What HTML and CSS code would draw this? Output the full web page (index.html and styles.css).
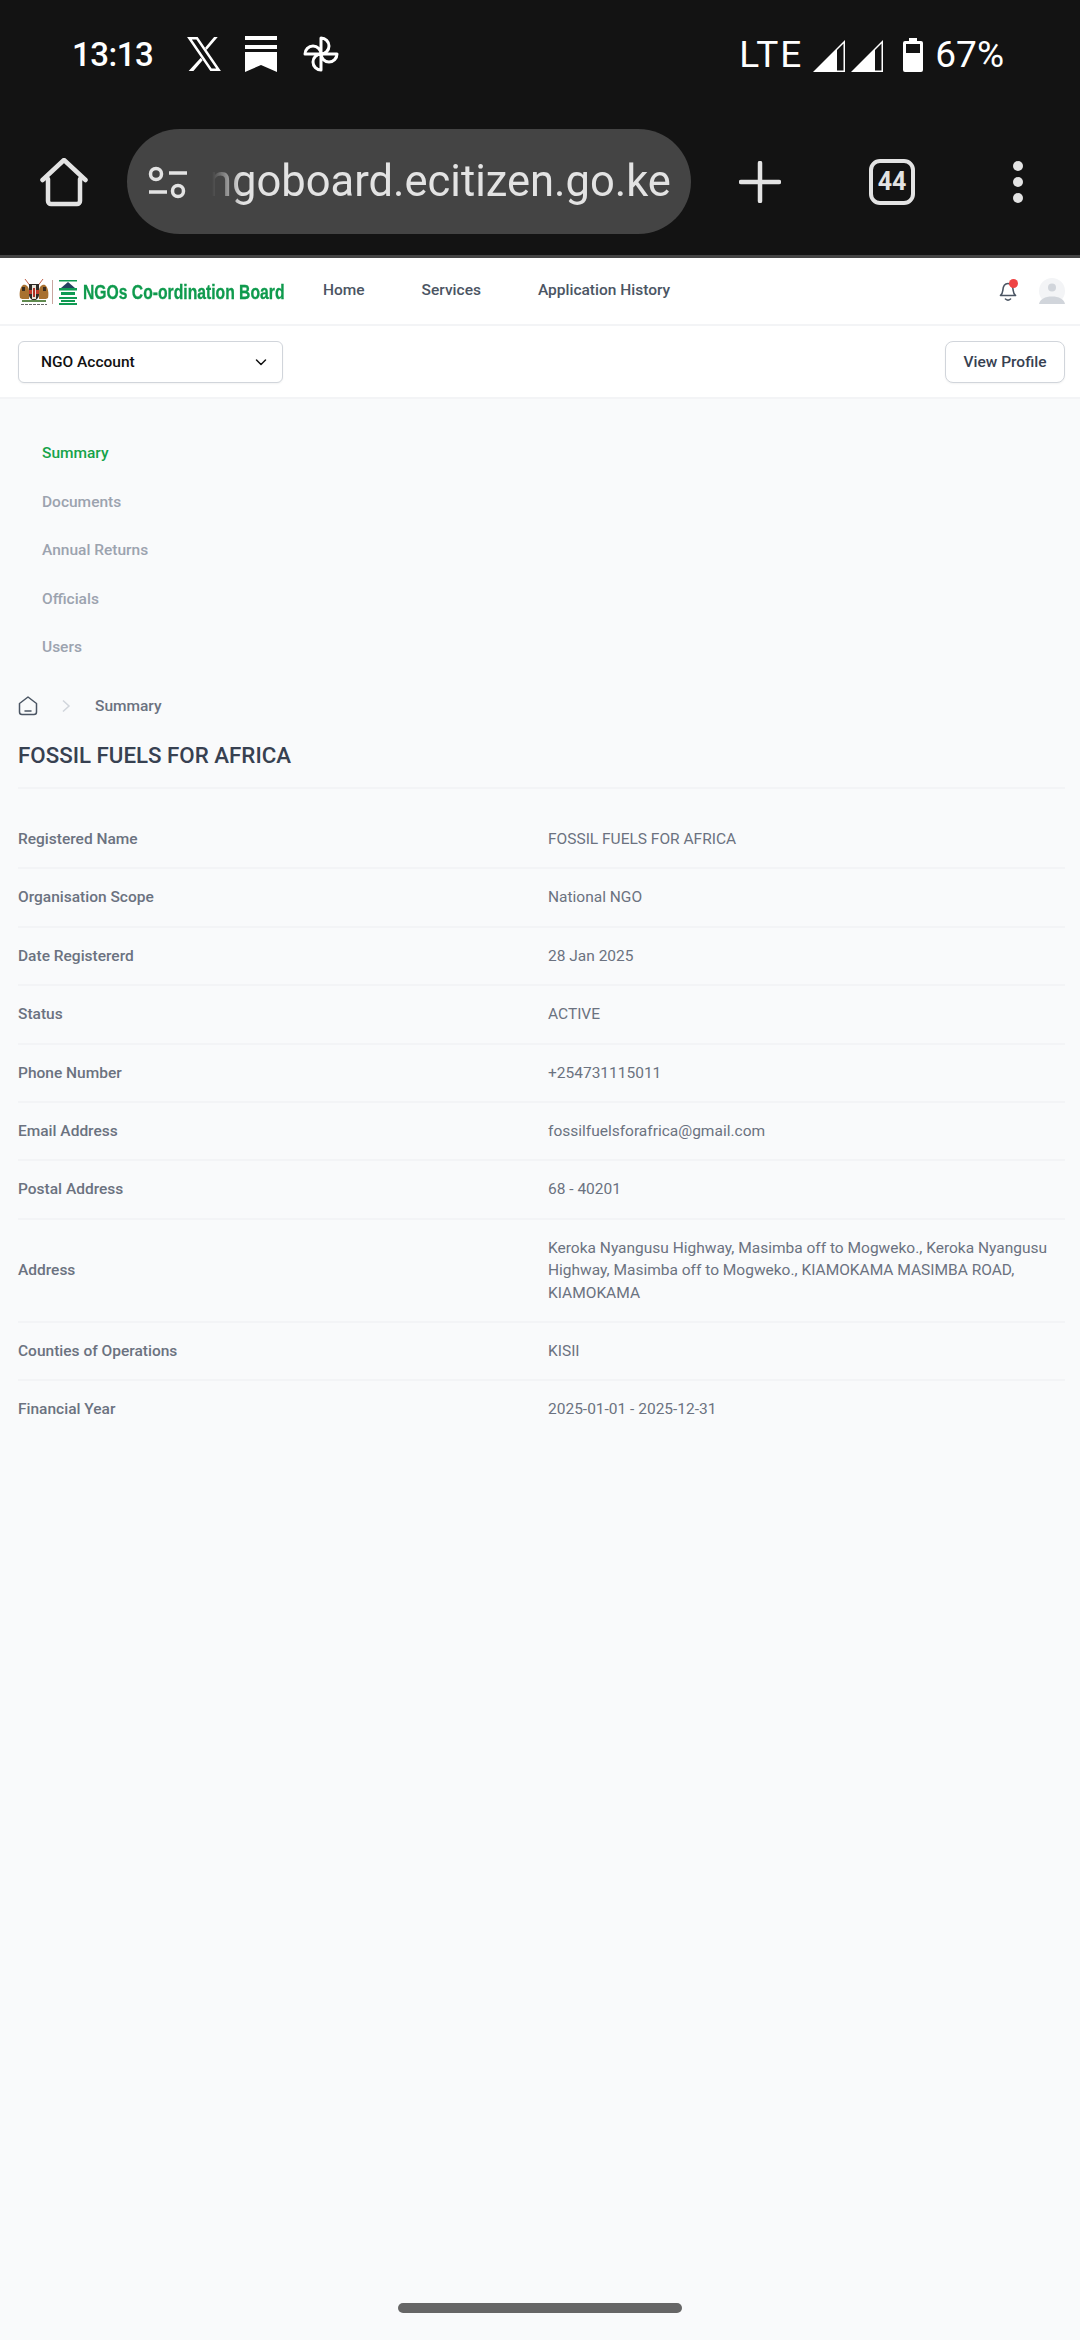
FILE: index.html
```html
<!DOCTYPE html>
<html lang="en">
<head>
    <meta charset="UTF-8">
    <meta name="viewport" content="width=device-width, initial-scale=1.0">
    <title>NGOs Co-ordination Board</title>
    <link rel="stylesheet" href="styles.css">
</head>
<body>
    <div class="chrome">
        <div class="status-bar">
            <div class="status-left">
                <span class="clock">13:13</span>
                <svg class="ic-x" viewBox="0 0 34 34"><path d="M1 1h10l22 32H23zM5.500 3.200 24.200 30.800h4.300L9.800 3.200z" fill="#fff" fill-rule="evenodd"/><path d="M30 1 19.500 13.200 18 11 26.500 1zM14 20.500 15.700 23 7 33H2.500z" fill="#fff"/></svg>
                <svg class="ic-news" viewBox="0 0 32 36"><path d="M0 0h32v4H0zM0 9h32v4H0zM0 16h32v20L16 29 0 36z" fill="#fff"/></svg>
                <svg class="ic-pin" viewBox="0 0 36 36">
                    <g fill="none" stroke="#fff" stroke-width="3" stroke-linejoin="round">
                        <path d="M18 18V2a8 8 0 0 1 0 16z"/>
                        <path d="M18 18h16a8 8 0 0 1-16 0z"/>
                        <path d="M18 18v16a8 8 0 0 1 0-16z"/>
                        <path d="M18 18H2a8 8 0 0 1 16 0z"/>
                    </g>
                </svg>
            </div>
            <div class="status-right">
                <span class="lte">LTE</span>
                <svg class="ic-signal" viewBox="0 0 32 32"><path fill-rule="evenodd" d="M32 0v32H0zM30.500 3.500 24 10v20.500h6.500z" fill="#fff"/></svg>
                <svg class="ic-signal" viewBox="0 0 32 32"><path fill-rule="evenodd" d="M32 0v32H0zM30.500 3.500 24 10v20.500h6.500z" fill="#fff"/></svg>
                <svg class="ic-batt" viewBox="0 0 20 34"><path fill-rule="evenodd" d="M6 0h8v3h4a2 2 0 0 1 2 2v27a2 2 0 0 1-2 2H2a2 2 0 0 1-2-2V5a2 2 0 0 1 2-2h4zM3 6v9h14V6z" fill="#fff"/></svg>
                <span class="batt-pct">67%</span>
            </div>
        </div>
        <div class="toolbar">
            <svg class="ic-home" viewBox="0 0 48 50"><path d="M8 21v22a3 3 0 0 0 3 3h26a3 3 0 0 0 3-3V21M2.500 22 24 2l21.500 20" fill="none" stroke="#e3e3e3" stroke-width="4.500" stroke-linecap="round" stroke-linejoin="round"/></svg>
            <div class="omnibox">
                <svg class="ic-tune" viewBox="0 0 40 34"><circle cx="8" cy="8" r="5.500" fill="none" stroke="#e3e3e3" stroke-width="3.500"/><path d="M21 7h18M1 26h18" stroke="#e3e3e3" stroke-width="3.500"/><circle cx="30" cy="25" r="5.500" fill="none" stroke="#e3e3e3" stroke-width="3.500"/></svg>
                <div class="url-clip"><span class="url">ngoboard.ecitizen.go.ke</span></div>
            </div>
            <svg class="ic-plus" viewBox="0 0 42 42"><path d="M21 2v38M2 21h38" stroke="#e3e3e3" stroke-width="4.500" stroke-linecap="round"/></svg>
            <div class="tab-count">44</div>
            <div class="ic-menu"><i></i><i></i><i></i></div>
        </div>
    </div>

    <header class="site-header">
        <div class="logo">
            <svg class="logo-arms" viewBox="0 0 32 28">
                <path d="M7 1l6 8M25 1l-6 8" stroke="#c0604a" stroke-width="1"/>
                <path d="M2 20c-1-5 0-11 3-13 3-1 6 2 6 6v8H4z" fill="#a8702f"/>
                <path d="M30 20c1-5 0-11-3-13-3-1-6 2-6 6v8h7z" fill="#a8702f"/>
                <path d="M4 9h3v4H4zM25 9h3v4h-3z" fill="#3a2c20"/>
                <path d="M11 6h10v11c0 3-3 5-5 6-2-1-5-3-5-6z" fill="#2f2b27"/>
                <path d="M11 12h10v4H11z" fill="#c0392b"/>
                <path d="M14 7h4v14h-4z" fill="#e8e2d8"/>
                <path d="M15 10h2v9h-2z" fill="#b03024"/>
                <path d="M4 22h24v2H4z" fill="#5f8a4e"/>
                <path d="M3 26.500h26" stroke="#666" stroke-width="1" stroke-dasharray="3 1"/>
            </svg>
            <span class="logo-rule"></span>
            <svg class="logo-mark" viewBox="0 0 20 26">
                <path d="M1 1h18v1.500H1z" fill="#0f9a52"/>
                <path d="M3 9 10 3l7 6z" fill="#23415f"/>
                <path d="M1 9h18v2.500H1zM3 13h14v3H3zM1 18h18v2H1zM3 21h14v2H3zM1 24h18v2H1z" fill="#0f9a52"/>
            </svg>
            <span class="logo-text">NGOs Co-ordination Board</span>
        </div>
        <nav class="main-nav">
            <a>Home</a>
            <a>Services</a>
            <a>Application History</a>
        </nav>
        <div class="header-actions">
            <div class="bell">
                <svg viewBox="0 0 18 22"><path d="M1.500 15.500c1.500-1 2-2.500 2.300-5C4 7 5 3.500 9 3.500s5 3.500 5.200 7c.3 2.500.8 4 2.300 5zM6.500 19c1.500 1.300 3.500 1.300 5 0" fill="none" stroke="#4b5563" stroke-width="1.600" stroke-linecap="round" stroke-linejoin="round"/></svg>
                <span class="bell-dot"></span>
            </div>
            <svg class="avatar" viewBox="0 0 26 26"><circle cx="13" cy="13" r="13" fill="#f3f4f6"/><circle cx="13" cy="9.500" r="4" fill="#d1d5db"/><path d="M0 26c1-5 6-7.500 13-7.500S25 21 26 26z" fill="#d1d5db"/></svg>
        </div>
    </header>

    <div class="account-bar">
        <div class="account-select">
            <span>NGO Account</span>
            <svg viewBox="0 0 14 14"><path d="M2.500 5 7 9.500 11.500 5" fill="none" stroke="#111" stroke-width="1.500" stroke-linecap="round" stroke-linejoin="round"/></svg>
        </div>
        <button class="profile-btn">View Profile</button>
    </div>

    <main class="content">
        <ul class="side-tabs">
            <li class="active">Summary</li>
            <li>Documents</li>
            <li>Annual Returns</li>
            <li>Officials</li>
            <li>Users</li>
        </ul>

        <div class="breadcrumb">
            <svg class="crumb-home" viewBox="0 0 20 20"><path d="M1.500 7.500 10 1l8.500 6.500V16a2.500 2.500 0 0 1-2.500 2.500H4A2.500 2.500 0 0 1 1.500 16zM7 15h6" fill="none" stroke="#4b5563" stroke-width="1.500" stroke-linecap="round" stroke-linejoin="round"/></svg>
            <svg class="crumb-sep" viewBox="0 0 10 14"><path d="M2 1.500 8 7l-6 5.500" fill="none" stroke="#d1d5db" stroke-width="1.500"/></svg>
            <span>Summary</span>
        </div>

        <h1>FOSSIL FUELS FOR AFRICA</h1>

        <dl class="details">
            <div class="row"><dt>Registered Name</dt><dd>FOSSIL FUELS FOR AFRICA</dd></div>
            <div class="row"><dt>Organisation Scope</dt><dd>National NGO</dd></div>
            <div class="row"><dt>Date Registererd</dt><dd>28 Jan 2025</dd></div>
            <div class="row"><dt>Status</dt><dd>ACTIVE</dd></div>
            <div class="row"><dt>Phone Number</dt><dd>+254731115011</dd></div>
            <div class="row"><dt>Email Address</dt><dd>fossilfuelsforafrica@gmail.com</dd></div>
            <div class="row"><dt>Postal Address</dt><dd>68 - 40201</dd></div>
            <div class="row"><dt>Address</dt><dd>Keroka Nyangusu Highway, Masimba off to Mogweko., Keroka Nyangusu Highway, Masimba off to Mogweko., KIAMOKAMA MASIMBA ROAD, KIAMOKAMA</dd></div>
            <div class="row"><dt>Counties of Operations</dt><dd>KISII</dd></div>
            <div class="row"><dt>Financial Year</dt><dd>2025-01-01 - 2025-12-31</dd></div>
        </dl>
    </main>

    <div class="home-indicator"></div>
</body>
</html>
```

FILE: styles.css
```css
* {
    box-sizing: border-box;
}
html, body {
    height: 100%;
}
body {
    margin: 0;
    height: 2340px;
    overflow: hidden;
    display: flex;
    flex-direction: column;
    position: relative;
    background-color: #f9fafb;
    font-family: Roboto, "Noto Sans", sans-serif;
    font-size: 15.500px;
}

/* browser chrome */
.chrome {
    height: 258px;
    background-color: #131313;
    border-bottom: 3px solid #444;
    flex-shrink: 0;
}
.status-bar {
    height: 110px;
    padding: 34px 76px 0 72px;
    display: flex;
    justify-content: space-between;
    color: #fff;
}
.status-left, .status-right {
    display: flex;
    align-items: center;
    height: 40px;
}
.clock {
    font-size: 33px;
    font-weight: 500;
    letter-spacing: -0.5px;
    margin-right: 33px;
}
.ic-x {
    width: 36px;
    height: 36px;
    margin-right: 23px;
}
.ic-news {
    width: 32px;
    height: 36px;
    margin-right: 26px;
}
.ic-pin {
    width: 36px;
    height: 36px;
}
.lte {
    font-size: 37px;
    letter-spacing: 2px;
    margin-right: 10px;
}
.ic-signal {
    width: 32px;
    height: 32px;
    margin-right: 6px;
    margin-top: 4px;
}
.ic-batt {
    width: 20px;
    height: 34px;
    margin-left: 14px;
    margin-right: 12px;
    margin-top: 2px;
}
.batt-pct {
    font-size: 37px;
}
.toolbar {
    height: 105px;
    display: flex;
    align-items: center;
    padding: 0 0 0 40px;
    margin-top: 19px;
}
.ic-home {
    width: 48px;
    height: 50px;
    margin-top: 2px;
    margin-right: 39px;
    flex-shrink: 0;
}
.omnibox {
    width: 564px;
    height: 105px;
    border-radius: 53px;
    background-color: #444;
    display: flex;
    align-items: center;
    padding: 0 23px 0 21px;
    flex-shrink: 0;
}
.ic-tune {
    width: 40px;
    height: 34px;
    flex-shrink: 0;
    margin-top: 2px;
}
.url-clip {
    margin-left: 20px;
    flex: 1;
    display: flex;
    justify-content: flex-end;
    white-space: nowrap;
    -webkit-mask-image: linear-gradient(to right, transparent 4px, #000 34px);
    mask-image: linear-gradient(to right, transparent 4px, #000 34px);
}
.url {
    font-size: 43.500px;
    color: #e3e3e3;
}
.ic-plus {
    width: 42px;
    height: 42px;
    margin-left: 48px;
    flex-shrink: 0;
}
.tab-count {
    width: 46px;
    height: 46px;
    margin-left: 88px;
    border: 4px solid #e3e3e3;
    border-radius: 11px;
    color: #e3e3e3;
    font-weight: 700;
    font-size: 25px;
    display: flex;
    align-items: center;
    justify-content: center;
    flex-shrink: 0;
}
.ic-menu {
    margin-left: 98px;
    display: flex;
    flex-direction: column;
    gap: 6px;
}
.ic-menu i {
    display: block;
    width: 10px;
    height: 10px;
    border-radius: 50%;
    background-color: #e3e3e3;
}

/* site header */
.site-header {
    height: 68px;
    background-color: white;
    border-bottom: 2px solid #f3f4f6;
    padding: 0 15px 0 18px;
    display: flex;
    align-items: center;
    flex-shrink: 0;
}
.logo {
    display: flex;
    align-items: center;
    width: 267px;
    height: 28px;
    margin-top: 2px;
    flex-shrink: 0;
}
.logo-arms {
    width: 32px;
    height: 28px;
    flex-shrink: 0;
}
.logo-rule {
    width: 1px;
    height: 24px;
    margin: 0 5px 0 2px;
    background-color: #c9a6a0;
    flex-shrink: 0;
}
.logo-mark {
    width: 20px;
    height: 26px;
    margin-right: 5px;
    flex-shrink: 0;
}
.logo-text {
    display: block;
    width: 202px;
    font-family: "Liberation Sans", Arial, sans-serif;
    font-weight: 700;
    font-size: 20px;
    white-space: nowrap;
    color: #0f9a4d;
    -webkit-text-stroke: 0.3px #0f9a4d;
    transform: scaleX(0.785);
    transform-origin: left center;
}
.main-nav {
    display: flex;
    gap: 57px;
    margin-left: 38px;
    margin-top: -3px;
}
.main-nav a {
    color: #4b5563;
    font-weight: 500;
}
.header-actions {
    margin-left: auto;
    display: flex;
    align-items: center;
    gap: 22px;
}
.bell {
    position: relative;
    width: 18px;
    height: 22px;
}
.bell svg {
    width: 18px;
    height: 22px;
    display: block;
}
.bell-dot {
    position: absolute;
    top: -1px;
    right: -1px;
    width: 9px;
    height: 9px;
    border-radius: 50%;
    background-color: #ef4444;
}
.avatar {
    width: 26px;
    height: 26px;
}

/* account row */
.account-bar {
    height: 73px;
    background-color: white;
    border-bottom: 2px solid #f3f4f6;
    padding: 0 15px 0 18px;
    display: flex;
    align-items: center;
    justify-content: space-between;
    flex-shrink: 0;
}
.account-select {
    width: 265px;
    height: 42px;
    padding: 0 14px 0 22px;
    background: white;
    border: 1px solid #d1d5db;
    border-radius: 6px;
    box-shadow: 0 1px 2px rgba(0, 0, 0, 0.05);
    color: #111;
    font-weight: 500;
    display: flex;
    align-items: center;
    justify-content: space-between;
}
.account-select svg {
    width: 14px;
    height: 14px;
}
.profile-btn {
    width: 120px;
    height: 42px;
    padding: 0;
    background: white;
    border: 1px solid #d1d5db;
    border-radius: 8px;
    box-shadow: 0 1px 2px rgba(0, 0, 0, 0.05);
    color: #374151;
    font-family: inherit;
    font-size: 15.500px;
    font-weight: 500;
}

/* page content */
.content {
    padding: 0 15px 0 18px;
}
.side-tabs {
    list-style: none;
    margin: 0;
    padding: 46px 0 0 24px;
    display: flex;
    flex-direction: column;
    gap: 31.500px;
    font-weight: 500;
    line-height: 17px;
    color: #9ca3af;
}
.side-tabs .active {
    color: #16a34a;
}
.breadcrumb {
    display: flex;
    align-items: center;
    margin-top: 40px;
    height: 20px;
    color: #6b7280;
    font-weight: 500;
}
.crumb-home {
    width: 20px;
    height: 20px;
}
.crumb-sep {
    width: 10px;
    height: 14px;
    margin: 0 24px 0 23px;
}
h1 {
    margin: 25px 0 0;
    padding-bottom: 18px;
    color: #374151;
    font-size: 22.300px;
    line-height: 28px;
    font-weight: 500;
    border-bottom: 2px solid #f3f4f6;
}
.details {
    margin: 22px 0 0;
}
.row {
    display: grid;
    grid-template-columns: 530px 1fr;
    align-items: center;
    padding: 17px 0;
    line-height: 22.400px;
    border-bottom: 2px solid #f3f4f6;
}
.row:last-child {
    border-bottom: none;
}
.row dt {
    color: #6b7280;
    font-weight: 500;
}
.row dd {
    margin: 0;
    color: #6b7280;
}
.home-indicator {
    position: absolute;
    left: 398px;
    bottom: 27px;
    width: 284px;
    height: 10px;
    border-radius: 5px;
    background-color: #666;
}
```
